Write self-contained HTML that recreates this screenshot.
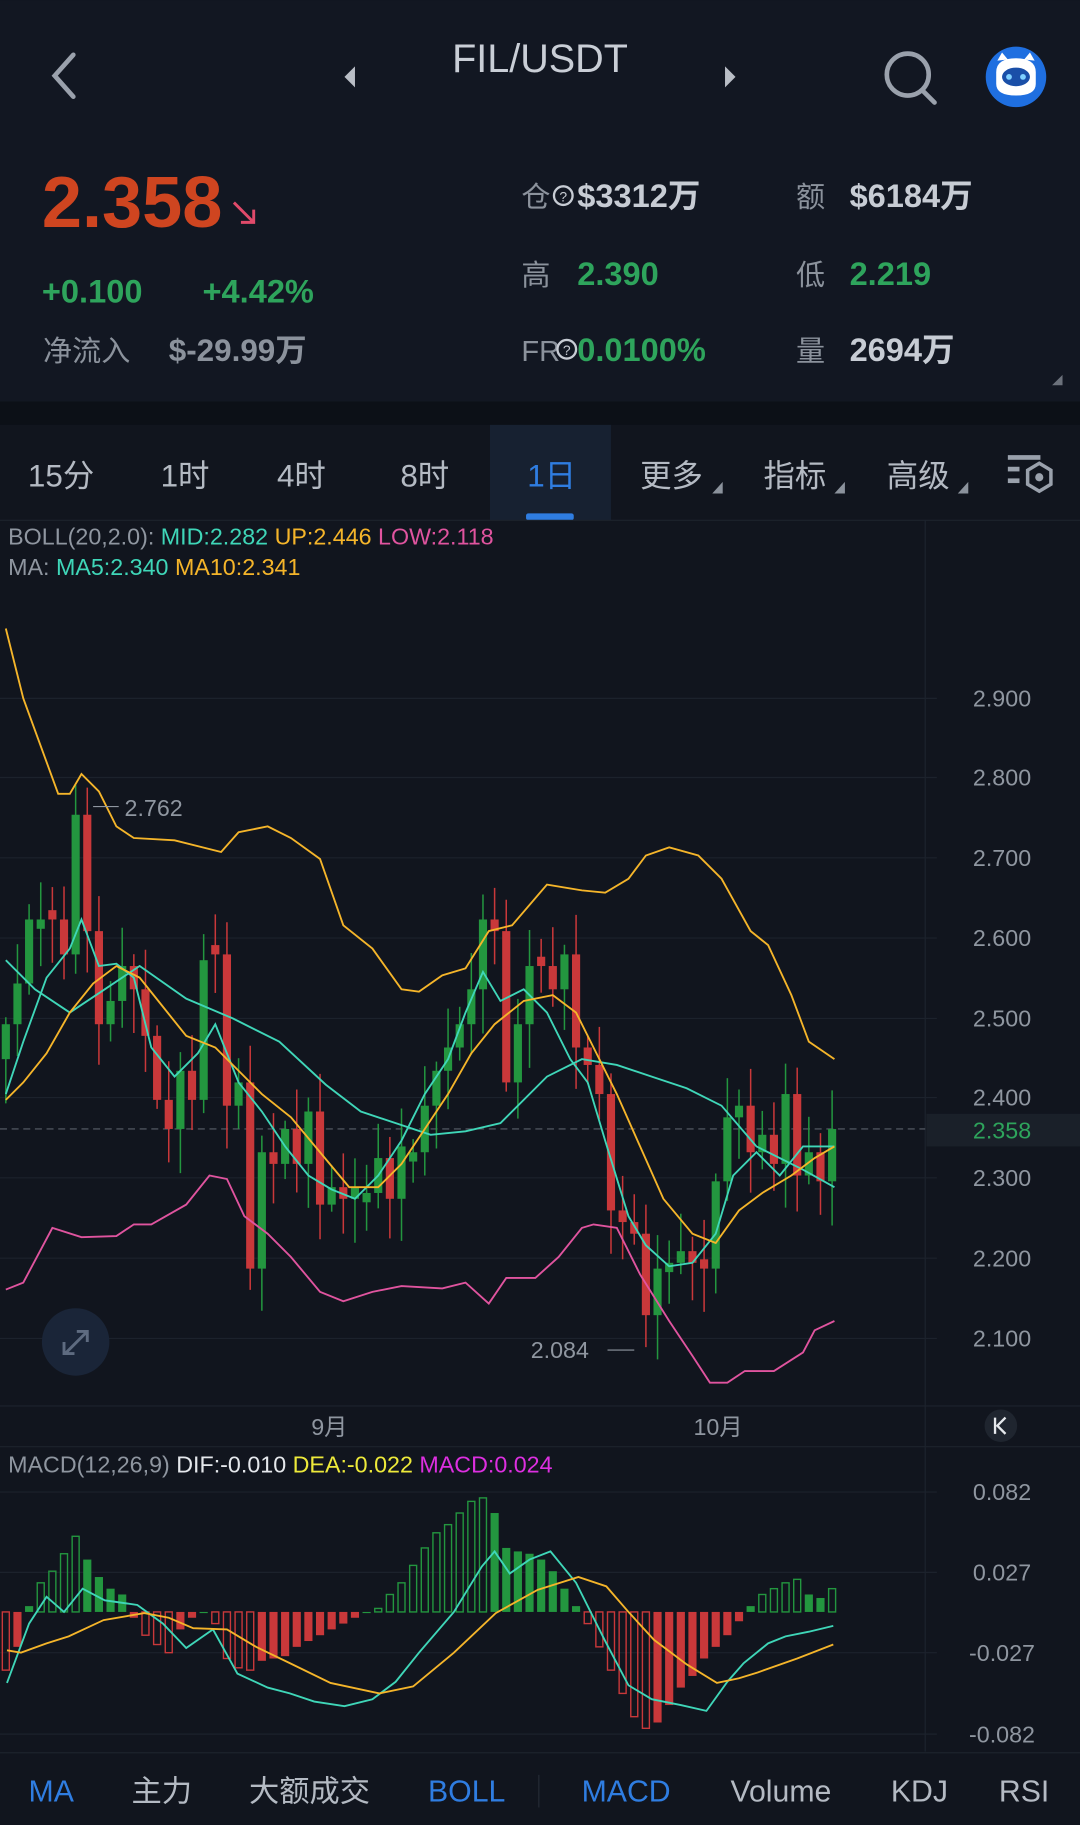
<!DOCTYPE html>
<html><head><meta charset="utf-8">
<style>
html,body{margin:0;padding:0;background:#11151e;}
svg{display:block}
text{font-family:"Liberation Sans","Noto Sans CJK SC",sans-serif}
</style></head>
<body>
<svg id="s" width="1080" height="1825" viewBox="0 0 928 1568" xmlns="http://www.w3.org/2000/svg">
<rect width="928" height="1568" fill="#11151e"/>
<rect y="0" width="928" height="345" fill="#121722"/>
<rect y="345" width="928" height="20" fill="#0c1017"/>
<rect y="365" width="928" height="82" fill="#11151e"/>
<!-- header -->
<path d="M63 47 L47 65 L63 83" stroke="#9aa1ac" stroke-width="4" fill="none" stroke-linecap="round"/>
<path d="M305 57 L296 66 L305 75 Z" fill="#b9bec6"/>
<path d="M623 57 L632 66 L623 75 Z" fill="#b9bec6"/>
<text x="464" y="62" font-size="34" fill="#c9ced6" text-anchor="middle">FIL/USDT</text>
<circle cx="780" cy="64" r="18" stroke="#9aa1ac" stroke-width="4" fill="none"/>
<path d="M793 78 L803 88" stroke="#9aa1ac" stroke-width="4" stroke-linecap="round"/>
<circle cx="873" cy="66" r="26" fill="#1f6fe0"/>
<path d="M856 62 Q856 50 873 50 Q890 50 890 62 L890 72 Q890 82 873 82 Q856 82 856 72 Z" fill="#fff"/>
<path d="M857 52 L861 45 L866 51 M889 52 L885 45 L880 51" fill="#fff"/>
<ellipse cx="873" cy="66" rx="12" ry="8" fill="#1a4fa8"/>
<circle cx="867" cy="66" r="2.5" fill="#7fd0ff"/><circle cx="879" cy="66" r="2.5" fill="#7fd0ff"/>
<!-- price -->
<text x="36" y="195" font-size="62" font-weight="bold" fill="#cf4520">2.358</text>
<path d="M201 174 L218 191 M218 180 L218 191 L207 191" stroke="#e04a6a" stroke-width="2.5" fill="none"/>
<text x="36" y="260" font-size="28" font-weight="bold" fill="#2ea45c">+0.100</text>
<text x="174" y="260" font-size="28" font-weight="bold" fill="#2ea45c">+4.42%</text>
<text x="37" y="310" font-size="25" fill="#8b929c">净流入</text>
<text x="145" y="310" font-size="27" font-weight="bold" fill="#8b929c">$-29.99万</text>
<g font-size="25" fill="#8b929c">
<text x="448" y="178">仓</text><text x="684" y="178">额</text>
<text x="448" y="245">高</text><text x="684" y="245">低</text>
<text x="448" y="310">FR</text><text x="684" y="310">量</text>
</g>
<circle cx="484" cy="168" r="8" stroke="#c7ccd4" stroke-width="2" fill="none"/><text x="484" y="173" font-size="12" fill="#c7ccd4" text-anchor="middle">?</text>
<circle cx="487" cy="300" r="8" stroke="#c7ccd4" stroke-width="2" fill="none"/><text x="487" y="305" font-size="12" fill="#c7ccd4" text-anchor="middle">?</text>
<g font-size="28" font-weight="bold">
<text x="496" y="178" fill="#c7ccd4">$3312万</text>
<text x="730" y="178" fill="#c7ccd4">$6184万</text>
<text x="496" y="245" fill="#2ea45c">2.390</text>
<text x="730" y="245" fill="#2ea45c">2.219</text>
<text x="496" y="310" fill="#2ea45c">0.0100%</text>
<text x="730" y="310" fill="#c7ccd4">2694万</text>
</g>
<path d="M913 322 L913 331 L904 331 Z" fill="#6b717b"/>
<!-- tabs -->
<rect x="421" y="365" width="104" height="82" fill="#172131"/>
<rect x="452" y="441" width="41" height="6" rx="2" fill="#2f7de1"/>
<g font-size="27" fill="#b4bac3">
<text x="24" y="418">15分</text><text x="138" y="418">1时</text><text x="238" y="418">4时</text><text x="344" y="418">8时</text>
<text x="453" y="418" fill="#2f7de1">1日</text>
<text x="550" y="418">更多</text><text x="656" y="418">指标</text><text x="762" y="418">高级</text>
</g>
<path d="M621 414 L621 424 L612 424 Z M726 414 L726 424 L717 424 Z M832 414 L832 424 L823 424 Z" fill="#8b929c"/>
<g fill="#9aa1ac"><rect x="866" y="391" width="28" height="4"/><rect x="866" y="401" width="10" height="4"/><rect x="866" y="411" width="10" height="4"/></g>
<path d="M893 398 L903 404 L903 416 L893 422 L883 416 L883 404 Z" stroke="#9aa1ac" stroke-width="3" fill="none"/><circle cx="893" cy="410" r="3.5" fill="#9aa1ac"/>
<!-- chart frame -->
<line x1="0" y1="447" x2="928" y2="447" stroke="#1d232d"/>
<line x1="795" y1="447" x2="795" y2="1505" stroke="#1d232d"/>
<line x1="0" y1="1208" x2="928" y2="1208" stroke="#1d232d"/>
<line x1="0" y1="1243" x2="928" y2="1243" stroke="#1d232d"/>
<line x1="0" y1="1506" x2="928" y2="1506" stroke="#1d232d"/>
<g stroke="#1c222c">
<line x1="0" y1="600" x2="805" y2="600"/><line x1="0" y1="668" x2="805" y2="668"/><line x1="0" y1="737" x2="805" y2="737"/><line x1="0" y1="806" x2="805" y2="806"/><line x1="0" y1="875" x2="805" y2="875"/><line x1="0" y1="943" x2="805" y2="943"/><line x1="0" y1="1012" x2="805" y2="1012"/><line x1="0" y1="1081" x2="805" y2="1081"/><line x1="0" y1="1150" x2="805" y2="1150"/>
<line x1="0" y1="1282" x2="805" y2="1282"/><line x1="0" y1="1351" x2="805" y2="1351"/><line x1="0" y1="1420" x2="805" y2="1420"/><line x1="0" y1="1490" x2="805" y2="1490"/>
</g>
<g font-size="20" fill="#8f96a0" text-anchor="middle">
<text x="861" y="607">2.900</text><text x="861" y="675">2.800</text><text x="861" y="744">2.700</text><text x="861" y="813">2.600</text><text x="861" y="882">2.500</text><text x="861" y="950">2.400</text><text x="861" y="1019">2.300</text><text x="861" y="1088">2.200</text><text x="861" y="1157">2.100</text>
<text x="861" y="1289">0.082</text><text x="861" y="1358">0.027</text><text x="861" y="1427">-0.027</text><text x="861" y="1497">-0.082</text>
<text x="283" y="1233">9月</text><text x="617" y="1233">10月</text>
</g>
<text x="7" y="468" font-size="20" fill="#8f96a0">BOLL(20,2.0): <tspan fill="#3fd6b8">MID:2.282</tspan> <tspan fill="#f5b52a">UP:2.446</tspan> <tspan fill="#e0549f">LOW:2.118</tspan></text>
<text x="7" y="494" font-size="20" fill="#8f96a0">MA: <tspan fill="#3fd6b8">MA5:2.340</tspan> <tspan fill="#f5b52a">MA10:2.341</tspan></text>
<text x="7" y="1265" font-size="20" fill="#8f96a0">MACD(12,26,9) <tspan fill="#e5e8ec">DIF:-0.010</tspan> <tspan fill="#eeea3a">DEA:-0.022</tspan> <tspan fill="#dd2fe0">MACD:0.024</tspan></text>
<!-- price line -->
<line x1="0" y1="970" x2="795" y2="970" stroke="#5a606a" stroke-dasharray="6 4"/>
<rect x="796" y="957" width="132" height="28" fill="#1a2029"/>
<text x="861" y="978" font-size="20" fill="#2ea45c" text-anchor="middle">2.358</text>
<g id="cand"></g>
<g fill="none" stroke-width="1.6">
<polyline stroke="#f5b52a" points="5,540 20,600 50,682 60,682 70,665 85,680 100,710 115,720 150,722 190,732 205,715 230,710 250,720 275,738 295,795 320,815 345,850 360,852 380,838 400,832 420,800 440,795 470,760 500,765 520,767 540,755 555,735 575,728 600,735 620,755 645,800 660,812 680,855 695,895 717,910"/>
<polyline stroke="#e0549f" points="5,1108 20,1102 45,1055 70,1063 100,1062 115,1052 130,1052 160,1035 180,1010 195,1013 210,1045 230,1060 250,1080 275,1110 295,1118 320,1110 345,1105 380,1107 400,1102 420,1120 435,1098 460,1098 480,1080 500,1055 510,1052 530,1055 550,1095 575,1135 595,1165 610,1188 625,1188 640,1178 665,1178 690,1162 700,1143 717,1135"/>
<polyline stroke="#3fd6b8" points="5,825 30,850 60,870 90,850 120,830 160,858 200,875 240,895 280,932 310,955 340,965 370,975 400,972 430,965 470,925 500,910 530,915 560,925 590,935 620,950 650,985 690,1005 717,1020"/>
<polyline stroke="#3fd6b8" points="5,940 20,895 40,840 60,815 70,790 85,830 100,828 115,840 130,900 150,925 170,905 185,880 205,930 225,955 245,985 265,1010 285,1022 305,1030 325,1010 345,980 365,940 385,910 400,870 415,835 430,860 450,850 470,870 490,910 505,930 520,980 540,1045 555,1070 575,1088 595,1085 615,1060 630,1010 650,990 670,1010 690,985 717,985"/>
<polyline stroke="#f5b52a" points="5,945 20,930 40,905 60,870 80,845 100,830 120,840 140,865 160,890 185,900 205,920 225,940 250,960 275,990 300,1020 325,1020 345,1000 365,970 385,940 405,905 425,880 450,860 475,855 495,870 510,900 530,940 550,985 570,1030 595,1060 615,1068 635,1040 655,1025 680,1010 700,995 717,985"/>
</g>
<line x1="80" y1="693" x2="102" y2="693" stroke="#8f96a0"/><text x="107" y="701" font-size="20" fill="#8f96a0">2.762</text>
<line x1="522" y1="1160" x2="545" y2="1160" stroke="#8f96a0"/><text x="456" y="1167" font-size="20" fill="#8f96a0">2.084</text>
<circle cx="65" cy="1153" r="29" fill="#1a2538"/>
<path d="M56 1163 L74 1145 M66 1144 L75 1144 L75 1153 M55 1153 L55 1163 L64 1163" stroke="#5e6b80" stroke-width="2.5" fill="none"/>
<circle cx="860" cy="1225" r="14" fill="#1f252f"/><path d="M855 1218 L855 1232 M864 1218 L857 1225 L864 1232" stroke="#e5e8ec" stroke-width="2" fill="none"/>
<!-- macd -->
<g id="hist"></g>
<g fill="none" stroke-width="1.6">
<polyline stroke="#3fd6b8" points="6,1446 25,1395 40,1372 55,1385 71,1365 90,1375 118,1379 140,1395 160,1416 183,1400 204,1438 230,1450 249,1455 270,1462 296,1466 320,1460 340,1445 360,1420 390,1385 414,1346 425,1333 438,1352 455,1340 473,1333 495,1360 520,1410 540,1448 560,1460 585,1465 607,1470 625,1445 639,1429 660,1412 675,1406 695,1402 716,1397"/>
<polyline stroke="#f5b52a" points="6,1418 18,1420 40,1412 59,1406 89,1392 124,1386 145,1390 166,1399 195,1400 220,1415 249,1429 284,1446 326,1455 355,1449 390,1420 426,1386 462,1366 497,1355 521,1363 540,1385 562,1409 590,1430 616,1446 635,1442 651,1437 685,1425 716,1413"/>
</g>
<!-- bottom bar -->
<line x1="463" y1="1525" x2="463" y2="1553" stroke="#252b35"/>
<g font-size="26" fill="#b4bac3" text-anchor="middle">
<text x="44" y="1548" fill="#2f7de1">MA</text><text x="139" y="1548">主力</text><text x="266" y="1548">大额成交</text><text x="401" y="1548" fill="#2f7de1">BOLL</text><text x="538" y="1548" fill="#2f7de1">MACD</text><text x="671" y="1548">Volume</text><text x="790" y="1548">KDJ</text><text x="880" y="1548">RSI</text>
</g>
</svg>
<script>
(function(){
var NS="http://www.w3.org/2000/svg";
function el(p,t,a){var e=document.createElementNS(NS,t);for(var k in a)e.setAttribute(k,a[k]);p.appendChild(e);return e;}
var closes=[880,845,790,790,790,820,700,800,880,860,830,850,890,945,970,920,945,825,820,950,930,1090,990,1000,970,1000,955,1035,1020,1030,1020,1025,995,1030,985,990,950,920,900,880,850,790,800,930,880,830,830,850,820,900,915,940,1040,1050,1060,1130,1090,1085,1075,1085,1090,1015,960,950,990,975,1000,940,1010,990,1015,970];
var g=document.getElementById("cand");
var prev=910;
for(var i=0;i<closes.length;i++){
 var x=5+10*i,c=closes[i],o=prev;
 if(Math.abs(c-o)<6){o=c+((i%2)?8:-8);}
 var up=c<o,col=up?"#23963f":"#c9383a";
 var bt=Math.min(o,c),bb=Math.max(o,c);
 var hi=bt-(6+Math.abs(Math.sin(i*1.7))*28),lo=bb+(6+Math.abs(Math.cos(i*2.3))*32);
 el(g,"line",{x1:x,y1:hi,x2:x,y2:lo,stroke:col,"stroke-width":1.3});
 el(g,"rect",{x:x-3.5,y:bt,width:7,height:Math.max(2,bb-bt),fill:col});
 prev=c;
}
var hv=[-50,-30,5,25,35,50,65,45,30,20,15,-5,-20,-28,-35,-15,-5,0,-10,-40,-48,-50,-42,-40,-38,-30,-25,-20,-15,-10,-5,0,3,15,25,40,55,68,75,85,95,98,85,55,52,50,45,35,20,5,-10,-30,-50,-70,-90,-100,-95,-80,-65,-55,-40,-30,-20,-8,5,15,20,25,28,15,12,20];
var h=document.getElementById("hist"),z=1385;
for(var j=0;j<hv.length;j++){
 var hx=5+10*j,v=hv[j],p=j?hv[j-1]:0,hc=v>=0?"#23963f":"#c9383a";
 var grow=Math.abs(v)>=Math.abs(p);
 var yy=v>=0?z-v:z,hh=Math.max(1,Math.abs(v));
 if(grow) el(h,"rect",{x:hx-3,y:yy,width:6,height:hh,fill:"none",stroke:hc,"stroke-width":1.2});
 else el(h,"rect",{x:hx-3.5,y:yy,width:7,height:hh,fill:hc});
}
})();
</script>
</body></html>
